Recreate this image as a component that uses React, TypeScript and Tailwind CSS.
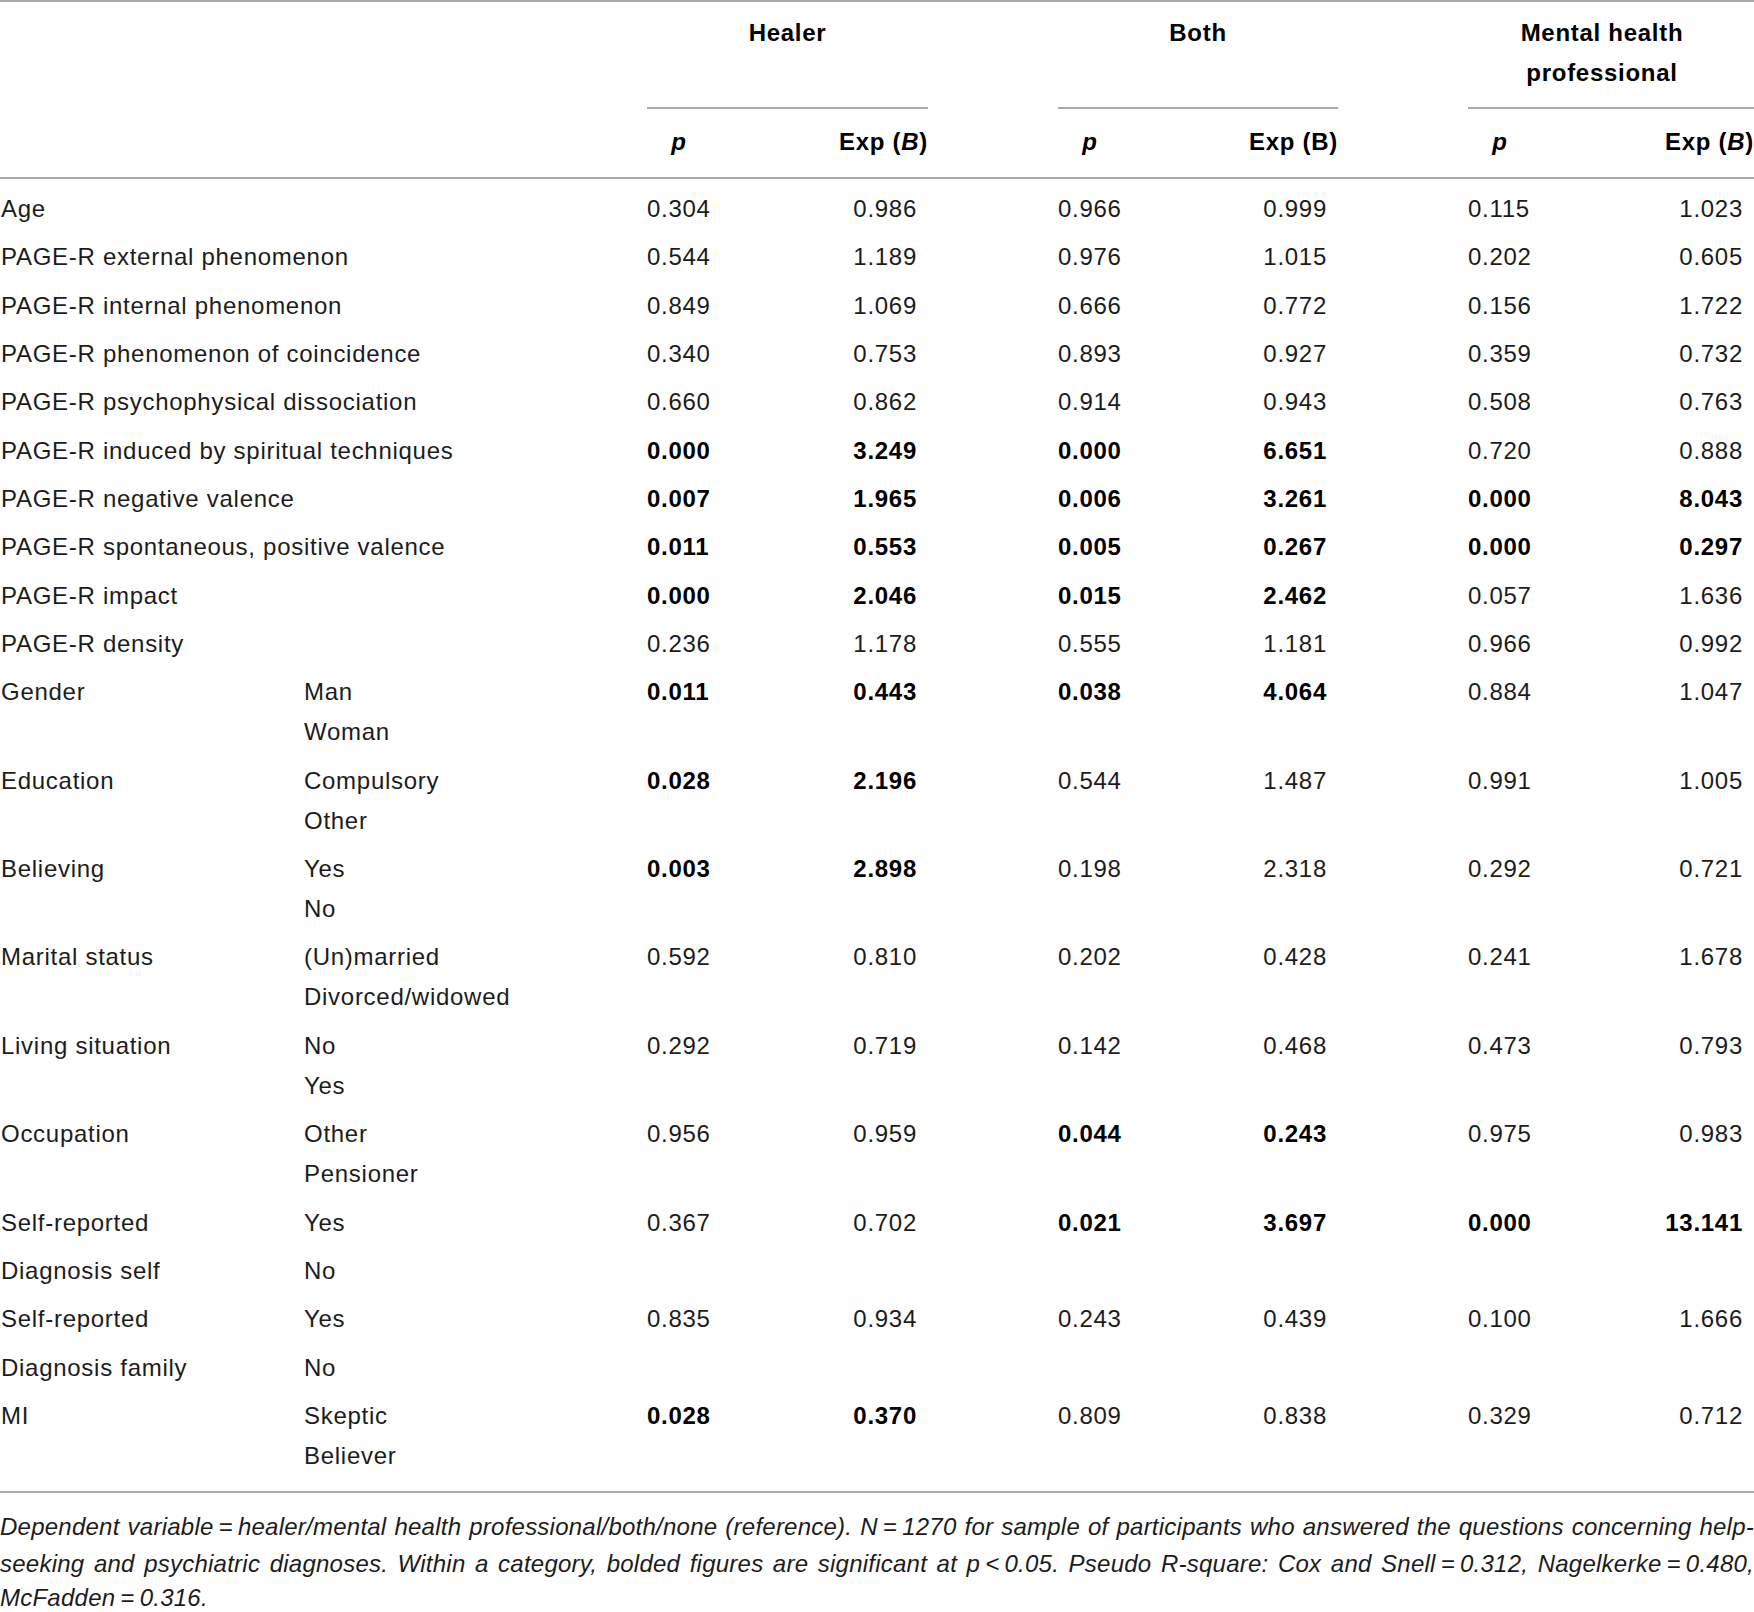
type Cell = [string, string, boolean];

type Row = {
  label: string;
  sub: string[];
  vals?: Cell[];
};

const rows: Row[] = [
  { label: "Age", sub: [], vals: [["0.304", "0.986", false], ["0.966", "0.999", false], ["0.115", "1.023", false]] },
  { label: "PAGE-R external phenomenon", sub: [], vals: [["0.544", "1.189", false], ["0.976", "1.015", false], ["0.202", "0.605", false]] },
  { label: "PAGE-R internal phenomenon", sub: [], vals: [["0.849", "1.069", false], ["0.666", "0.772", false], ["0.156", "1.722", false]] },
  { label: "PAGE-R phenomenon of coincidence", sub: [], vals: [["0.340", "0.753", false], ["0.893", "0.927", false], ["0.359", "0.732", false]] },
  { label: "PAGE-R psychophysical dissociation", sub: [], vals: [["0.660", "0.862", false], ["0.914", "0.943", false], ["0.508", "0.763", false]] },
  { label: "PAGE-R induced by spiritual techniques", sub: [], vals: [["0.000", "3.249", true], ["0.000", "6.651", true], ["0.720", "0.888", false]] },
  { label: "PAGE-R negative valence", sub: [], vals: [["0.007", "1.965", true], ["0.006", "3.261", true], ["0.000", "8.043", true]] },
  { label: "PAGE-R spontaneous, positive valence", sub: [], vals: [["0.011", "0.553", true], ["0.005", "0.267", true], ["0.000", "0.297", true]] },
  { label: "PAGE-R impact", sub: [], vals: [["0.000", "2.046", true], ["0.015", "2.462", true], ["0.057", "1.636", false]] },
  { label: "PAGE-R density", sub: [], vals: [["0.236", "1.178", false], ["0.555", "1.181", false], ["0.966", "0.992", false]] },
  { label: "Gender", sub: ["Man", "Woman"], vals: [["0.011", "0.443", true], ["0.038", "4.064", true], ["0.884", "1.047", false]] },
  { label: "Education", sub: ["Compulsory", "Other"], vals: [["0.028", "2.196", true], ["0.544", "1.487", false], ["0.991", "1.005", false]] },
  { label: "Believing", sub: ["Yes", "No"], vals: [["0.003", "2.898", true], ["0.198", "2.318", false], ["0.292", "0.721", false]] },
  { label: "Marital status", sub: ["(Un)married", "Divorced/widowed"], vals: [["0.592", "0.810", false], ["0.202", "0.428", false], ["0.241", "1.678", false]] },
  { label: "Living situation", sub: ["No", "Yes"], vals: [["0.292", "0.719", false], ["0.142", "0.468", false], ["0.473", "0.793", false]] },
  { label: "Occupation", sub: ["Other", "Pensioner"], vals: [["0.956", "0.959", false], ["0.044", "0.243", true], ["0.975", "0.983", false]] },
  { label: "Self-reported", sub: ["Yes"], vals: [["0.367", "0.702", false], ["0.021", "3.697", true], ["0.000", "13.141", true]] },
  { label: "Diagnosis self", sub: ["No"] },
  { label: "Self-reported", sub: ["Yes"], vals: [["0.835", "0.934", false], ["0.243", "0.439", false], ["0.100", "1.666", false]] },
  { label: "Diagnosis family", sub: ["No"] },
  { label: "MI", sub: ["Skeptic", "Believer"], vals: [["0.028", "0.370", true], ["0.809", "0.838", false], ["0.329", "0.712", false]] },
];

// left offset + width of each column group
const groups = [
  { ml: "ml-0", w: "w-[281px]" },
  { ml: "ml-[130px]", w: "w-[280px]" },
  { ml: "ml-[130px]", w: "w-[286px]" },
];

const Rule = () => <div className="h-[2px] bg-[#a9a9a9]" />;

function DataRow({ row, last }: { row: Row; last: boolean }) {
  return (
    <div className={`flex leading-[40px] ${last ? "pb-[15px]" : "pb-[8.35px]"}`}>
      <div className="w-[304px] shrink-0 pl-px whitespace-nowrap">{row.label}</div>
      <div className="w-[343px] shrink-0 whitespace-nowrap">
        {row.sub.map((s) => (
          <div key={s}>{s}</div>
        ))}
      </div>
      {groups.map((g, i) => {
        const v = row.vals?.[i];
        return (
          <div key={i} className={`flex shrink-0 ${g.ml} ${g.w} ${v && v[2] ? "font-bold text-black" : ""}`}>
            <div className="w-[64px]">{v ? v[0] : ""}</div>
            <div className="flex-1 text-right pr-[11px]">{v ? v[1] : ""}</div>
          </div>
        );
      })}
    </div>
  );
}

export default function App() {
  return (
    <div className="w-[1754px] h-[1612px] overflow-hidden bg-white text-[#1c1c1c] font-['Liberation_Sans',Arial,sans-serif] text-[24px] tracking-[0.03em]">
      <Rule />
      {/* column headers */}
      <div className="flex pt-[11px] font-bold text-black leading-[40px]">
        <div className="w-[647px] shrink-0" />
        {["Healer", "Both", "Mental health professional"].map((name, i) => (
          <div key={name} className={`shrink-0 ${groups[i].ml} ${groups[i].w}`}>
            <div className={`h-[79px] text-center ${i === 2 ? "pr-[18px]" : ""}`}>
              {i === 2 ? (
                <>
                  <div>Mental health</div>
                  <div>professional</div>
                </>
              ) : (
                name
              )}
            </div>
            <div className="mt-[15px] h-[2px] bg-[#a9a9a9]" />
            <div className="flex pt-[13px] pb-[15px]">
              <div className="w-[64px] text-center italic">p</div>
              <div className="flex-1 text-right">
                Exp ({i === 1 ? "B" : <span className="italic">B</span>})
              </div>
            </div>
          </div>
        ))}
      </div>
      <Rule />
      <div className="pt-[10px]">
        {rows.map((r, i) => (
          <DataRow key={i} row={r} last={i === rows.length - 1} />
        ))}
      </div>
      <Rule />
      <div className="pt-[15px] italic text-[24px] leading-[37.5px] tracking-[0.01em] text-[#1c1c1c]">
        <div className="text-justify [text-align-last:justify] whitespace-nowrap">
          Dependent variable{"\u2009=\u2009"}healer/mental health professional/both/none (reference). N{"\u2009=\u2009"}1270 for sample of participants who answered the questions concerning help-
        </div>
        <div className="text-justify [text-align-last:justify] whitespace-nowrap">
          seeking and psychiatric diagnoses. Within a category, bolded figures are significant at p{"\u2009<\u2009"}0.05. Pseudo R-square: Cox and Snell{"\u2009=\u2009"}0.312, Nagelkerke{"\u2009=\u2009"}0.480,
        </div>
        <div className="mt-[5px] leading-[20px]">McFadden{"\u2009=\u2009"}0.316.</div>
      </div>
    </div>
  );
}
